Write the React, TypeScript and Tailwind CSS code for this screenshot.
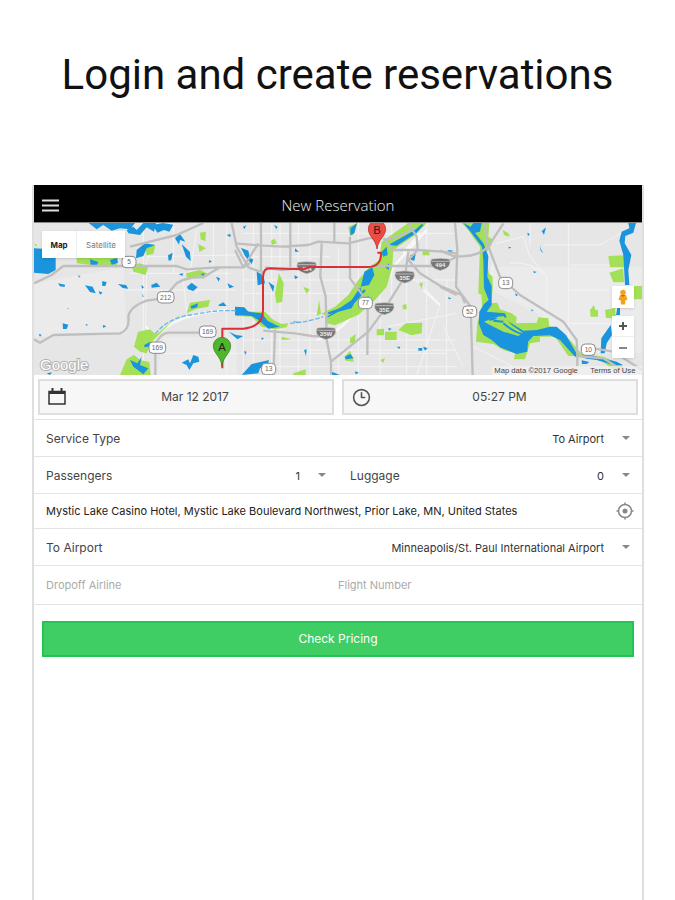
import { Clock3 } from "lucide-react";
import type { ReactNode } from "react";

const WATER = "#1a94dc";
const PARK = "#a3e055";
const ROAD = "#bfbfbf";

function Shield({ x, y, label }: { x: number; y: number; label: string }) {
  const w = label.length > 2 ? 50 : 42;
  return (
    <g>
      <rect x={x - w / 2} y={y - 17} width={w} height={34} rx={12} fill="#fff" stroke="#8a8a8a" strokeWidth={3} />
      <text x={x} y={y + 7} textAnchor="middle" fontSize={20} fill="#666">{label}</text>
    </g>
  );
}

function Interstate({ x, y, label }: { x: number; y: number; label: string }) {
  return (
    <g transform={`translate(${x} ${y})`}>
      <path d="M-27-15Q0-20 27-15Q38 10 0 20Q-38 10-27-15Z" fill="#777" stroke="#ddd" strokeWidth={2} />
      <path d="M-26-8H26" stroke="#ddd" strokeWidth={2} />
      <text y={10} textAnchor="middle" fontSize={18} fontWeight="bold" fill="#eee">{label}</text>
    </g>
  );
}

function Pin({ x, y, label, fill, edge }: { x: number; y: number; label: string; fill: string; edge: string }) {
  return (
    <g transform={`translate(${x} ${y})`}>
      <path d="M0 0C-4-30-26-38-26-60A26 26 0 0 1 26-60C26-38 4-30 0 0Z" fill={fill} stroke={edge} strokeWidth={2} />
      <text y={-46} textAnchor="middle" fontSize={34} fill="#222">{label}</text>
    </g>
  );
}

function RouteMap() {
  return (
    <svg viewBox="12 129 1824 456" preserveAspectRatio="xMidYMid slice" className="block h-full w-full font-['Liberation_Sans',sans-serif]" role="img" aria-label="Route map">
      <rect x="12" y="129" width="1824" height="456" fill="#e6e6e6" />
      <path d="M12 310L280 262L290 460L12 470ZM400 470H620V585H380ZM1380 260H1836V520H1640L1520 400L1380 330Z" fill="#ebebeb" />
      {/* minor streets */}
      <g stroke="#f4f4f4" strokeWidth={3} fill="none">
        <path d="M340 129V585M375 200L350 240L347 440L376 470M430 129V280M460 300L470 400M500 150L480 280L500 340M550 129V260M590 129V585M640 200V585M670 129V585M725 129V560M750 129V585M805 129V585M840 129V585M925 200V585M985 129V585M1050 129V585M1085 129V350M1130 200V585M1190 129V585M1250 300V585" />
        <path d="M290 330H620M350 230L620 225M300 280H600M400 520H1250M640 160H1280M640 230H900M640 300H1050M640 340H1000M700 400H900M640 480H1280M740 510H1280M660 560H1280M1110 300H1280M1070 440L1280 400" />
        <path d="M1615 129V500M1400 190L1480 170L1500 230L1550 290V400M1540 195H1710L1790 150M1620 255H1780M1620 330H1740M1620 430H1750M1440 250Q1500 240 1550 290M1330 500L1450 560M1230 375L1160 585M1230 375L1180 320L1140 290M1240 440L1300 560M1390 230L1380 400M1500 129V200" />
      </g>
      <path d="M376 470C410 435 460 400 590 390M347 440L376 470L350 500M860 480Q940 450 970 400Q1050 360 1090 260L1190 150M1120 220L1170 160M1230 375L1180 330" stroke="#f8f8f8" strokeWidth={7} fill="none" />

      {/* parks */}
      <g fill={PARK}>
        <path d="M140 232H265L260 262L190 256L140 250ZM305 256L330 250L355 260L347 285L310 275ZM345 200L376 196L370 222L350 226ZM510 158L528 155L526 184L512 178ZM505 192L528 205L508 216ZM468 280L510 270L540 284L520 292H470ZM480 368L540 360L535 380L500 386L470 400ZM324 455L360 448L378 464L440 412L455 404L430 420L365 486L350 520L330 515L312 500ZM270 585L290 538L312 524L330 540L358 546L362 585ZM12 192H20V200Z" />
        <path transform="translate(615 0)" d="M340 140L368 129L355 165L345 168ZM108 182L118 176L126 190L110 194ZM124 370L120 340L132 280L146 310L142 365ZM30 222L44 230L42 240ZM205 320L224 328L215 342ZM55 395L90 395L115 420L140 432L160 430L155 442L120 448L80 440L50 410L0 408V390ZM245 408L252 360L258 400L275 408V430L300 436L370 404L420 360L455 320L472 262L475 210L540 165L575 129H520L440 185L432 240L400 265L370 300L340 345L300 380ZM345 475L362 462L360 490H345ZM425 448L447 446V466H425ZM450 455H485V480H450ZM490 450L512 430L562 428L560 460L530 466ZM552 310L564 308L560 326ZM502 376L514 372L515 388H504ZM563 212H583V226H563ZM328 530L345 512L357 545L332 542ZM175 580L212 568V585H175ZM435 540L450 535L445 548ZM140 470L170 478L140 480Z" />
        <path transform="translate(1230 0)" d="M65 129H148L145 170L160 180L148 208L138 215L146 280L158 290V330L152 370L172 368L180 388L215 400L230 412L228 430L290 428L295 412L325 415L328 440L350 442L390 480L430 528H385L345 470H300V485L270 490L255 538H222L225 520L190 510L160 492L108 485L112 430L126 380L124 345L115 340L120 200L105 180L85 150ZM188 150L205 160L210 170L192 165ZM505 228L552 226V262H510ZM508 278L550 265L552 307H520ZM580 318H606V358H580ZM495 390L525 384L528 415L498 414ZM450 390L462 376L466 390H474V410H452ZM430 522L490 530L540 552L560 570L520 568L480 540Z" />
      </g>

      {/* lakes and rivers */}
      <g fill={WATER}>
        <path d="M12 205L64 208L77 230V270L55 282L12 278ZM176 129H315L300 148L270 145L245 152L220 135L200 148ZM290 150L310 140L320 150L340 129H378L372 155L350 142L330 165L295 160ZM368 135L398 129L430 134L418 155L402 150L382 158ZM320 210L345 190L376 195L350 205L340 228L318 235ZM435 175L450 162L466 185L450 180L447 194ZM455 192L480 216L482 244L468 230ZM414 226L428 218L424 240L416 242ZM180 238L205 246L200 256L182 254ZM240 240L260 234L264 248L245 255ZM165 316L188 320L197 340L180 336ZM216 304L230 306L226 318H217ZM264 312L288 315L295 326L278 324ZM84 310L105 314L104 321L90 319ZM364 315L380 308L391 320L365 323ZM471 320L485 308L503 322L490 333L474 328ZM558 290L570 295L566 305ZM592 310L612 320L598 325ZM206 333L218 338L210 344ZM145 284L152 292H146ZM98 430L115 434L110 447H99ZM218 435L229 438L220 444ZM26 462L35 464L30 470ZM166 432L174 434L170 438ZM334 314L342 322L336 326ZM337 340L341 350L338 351ZM482 378L504 370L502 382L484 386ZM565 375L580 367L590 378H567ZM446 282L460 280L457 288ZM512 282L524 280L520 288ZM538 240L546 245L536 248ZM590 165L602 162L601 172ZM342 496L360 485L356 500L344 502ZM300 540L322 550L335 530L330 555L355 565L340 583L310 560ZM455 548L475 538L480 550L490 525L505 530L508 545L490 550L478 570L470 555ZM597 455L618 465L640 468L622 478ZM50 580L66 577L60 585ZM112 384L118 387H113ZM615 380L635 395L622 408Z" />
        <path transform="translate(615 0)" d="M18 203L40 212L45 235L55 238L50 252L30 228ZM346 145L366 129L358 160L346 165ZM24 140L34 136L28 148ZM117 135L128 140L124 148ZM65 275L85 285L90 310L68 316ZM100 305L118 318L114 336ZM0 380L28 382L40 395L80 400L100 425L135 440L100 446L70 420L50 408L0 405ZM178 286L190 292L180 298ZM180 205L192 215H180ZM276 410L350 360L378 318L388 275L412 262L418 285L402 315L375 320L382 340L365 355L350 385L310 395L280 412ZM440 215L455 200L458 225L444 230ZM462 250L450 262L462 270ZM460 195L540 150L560 132L566 135L545 158L485 197ZM526 225L542 222L538 242L528 240ZM330 530L346 522L356 535L332 538ZM20 585L50 552L102 540L98 555L75 565L70 580ZM207 510L215 508L213 528ZM28 512L35 516L30 525ZM390 358L400 348L410 365ZM550 504H562V512H550ZM564 500L578 504L570 512ZM290 575L315 585H290ZM485 500L496 500L493 507ZM460 444L470 446L462 452ZM360 574L372 578L362 583ZM80 472L87 476L80 480ZM172 424L200 426L190 430Z" />
        <path transform="translate(1230 0)" d="M70 129L92 140L100 129H125L120 155L105 158L130 190L145 228L142 290L155 318V375L140 395L195 400L200 412L190 415L250 452L290 450L330 440H350L378 465L415 530H405L360 480L330 466L280 468L264 485L262 515L230 522L180 502L155 480L130 465L116 430L118 395L132 372L146 360L132 325L130 240L126 200L95 160ZM565 129H588L580 158L556 168L554 190L574 225L565 270L568 315H555L550 225L538 182L545 155L568 145ZM532 384H540V405H528ZM512 435L516 465L500 490L494 520H482L484 475ZM415 528L450 525L530 545L550 556L520 555L470 540L440 536ZM425 541L448 546L440 552H426ZM305 154L318 142L312 164ZM262 158L270 162L264 168ZM300 196L304 210L310 220L302 212ZM205 200L214 202L207 206ZM22 210L40 212L30 218ZM25 350L34 356L26 358ZM225 340L234 345L228 349ZM274 388L281 391L275 394ZM280 273L290 276L282 280Z" />
      </g>
      <path transform="translate(1230 0)" d="M132 425L165 412L190 408L215 435L248 458L235 468L190 455L150 435Z" fill={PARK} />
      <path transform="translate(1230 0)" d="M160 422L190 425M148 420L170 414M190 430Q220 455 245 462" stroke={WATER} strokeWidth={6} fill="none" />
      <path d="M376 462C400 430 440 410 480 405S540 390 620 392M780 430Q840 425 880 410" stroke="#68b7e6" strokeWidth={4} fill="none" strokeDasharray="14 5" />
      <path d="M895 400L960 378L1005 330M625 385L690 415L730 435" stroke={WATER} strokeWidth={7} fill="none" />

      {/* highways */}
      <g stroke={ROAD} strokeWidth={7} fill="none" strokeLinejoin="round">
        <path d="M12 310L65 285L100 258H440L470 268L560 262H640L660 250M12 478L30 488L70 465L270 460Q300 450 295 410Q300 380 350 362L400 355L440 310Q470 290 520 292L570 262M376 585V495Q390 460 415 458H520M300 200L440 165L520 129M605 129L620 200L655 262L690 275" />
        <path transform="translate(615 0)" d="M0 190L70 196L140 200L220 195L250 185L340 190L400 175L440 172M78 129V270L85 290M166 129V262M298 129V185M0 210L25 262L70 190M345 170V295L375 335L390 355M260 190L256 290L272 350L275 480L288 545V585M288 545L400 455L440 400L510 290L520 215M398 380L397 525M120 450L115 585M90 262L140 270L220 262M410 258H610L665 230M445 175L475 210H550L620 215L665 220M520 129L545 170L548 210L520 240L555 280L620 320L680 345L690 370M85 452L180 460L230 468L275 470M445 180Q500 170 540 145" />
        <path transform="translate(1230 0)" d="M45 129L52 210L48 320L70 350L92 380L98 585M0 212L40 228Q110 235 145 200L190 130M135 129L140 185Q160 240 180 290L240 345L370 425L410 480L412 528L490 535L570 585M460 505L520 515L606 570M412 510V560M0 320L50 345" />
      </g>

      <Shield x={297} y={246} label="5" />
      <Shield x={407} y={352} label="212" />
      <Shield x={382} y={503} label="169" />
      <Shield x={533} y={455} label="169" />
      <Shield x={716} y={567} label="13" />
      <Shield x={1006} y={369} label="77" />
      <Shield x={1319} y={395} label="52" />
      <Shield x={1427} y={309} label="13" />
      <Shield x={1675} y={509} label="10" />
      <Interstate x={830} y={262} label="494" />
      <Interstate x={888} y={459} label="35W" />
      <Interstate x={1124} y={290} label="35E" />
      <Interstate x={1063} y={385} label="35E" />
      <Interstate x={1231} y={252} label="494" />

      <path d="M577 565V446H640Q700 440 699 390V290Q700 265 720 265L820 268L840 261H1010Q1055 262 1053 218H1042" fill="none" stroke="#d92f36" strokeWidth={6} strokeLinejoin="round" />
      <Pin x={576} y={558} label="A" fill="#4fb52b" edge="#2c7d16" />
      <Pin x={1041} y={207} label="B" fill="#ee4b43" edge="#a52620" />

      <text x={30} y={571} fontSize={45} fill="#fff" stroke="#b0b0b0" strokeWidth={6} paintOrder="stroke">Google</text>
      <rect x={1385} y={558} width={451} height={27} fill="#f2f2f2" opacity={0.75} />
      <text x={1393} y={580} fontSize={23} fill="#444">Map data ©2017 Google</text>
      <text x={1681} y={580} fontSize={23} fill="#444">Terms of Use</text>
    </svg>
  );
}

function Caret() {
  return <span aria-hidden="true" className="pointer-events-none absolute top-1/2 right-3 -mt-0.5 border-x-4 border-t-4 border-x-transparent border-t-[#888]" />;
}

function SelectRow({ id, label, options }: { id: string; label: string; options: string[] }) {
  return (
    <div className="relative flex h-9 min-w-0 flex-1 items-center">
      <label htmlFor={id} className="shrink-0 pt-0.5 pl-3 text-xs text-[#444]">{label}</label>
      <select id={id} className="h-full min-w-0 flex-1 appearance-none bg-transparent pt-0.5 pr-[38px] text-[11px] text-[#333] outline-none [text-align-last:right]">
        {options.map((o) => <option key={o}>{o}</option>)}
      </select>
      <Caret />
    </div>
  );
}

function PickerButton({ icon, children }: { icon: ReactNode; children: ReactNode }) {
  return (
    <button type="button" className="flex h-9 flex-1 items-center border-2 border-[#dedede] bg-[#f7f7f7] px-2 text-xs text-[#444]">
      {icon}
      <span className="flex-1">{children}</span>
    </button>
  );
}

export default function App() {
  return (
    <main className="flex min-h-screen flex-col bg-white font-[Inter,'Liberation_Sans',sans-serif]">
      <h1 className="pt-12 text-center font-[Roboto,sans-serif] text-[42px] leading-[54px] text-[#111]">Login and create reservations</h1>
      <section className="mt-[83px] mr-[31px] ml-8 flex flex-1 flex-col border-x-2 border-[#dfdfdf]">
        <header className="relative flex h-[38px] items-center justify-center border-b border-[#888] bg-black">
          <button type="button" aria-label="Open menu" className="absolute top-[14px] left-2">
            <svg width="17" height="13" viewBox="0 0 17 13" stroke="#ddd" strokeWidth="2"><path d="M0 1.500H17M0 6.500H17M0 11.500H17" /></svg>
          </button>
          <h2 className="pt-1 font-['Open_Sans','Noto_Sans',sans-serif] text-[15px] font-light text-[#eee]">New Reservation</h2>
        </header>

        <div className="relative aspect-[4/1] w-full overflow-hidden">
          <RouteMap />
          <div className="absolute top-2 left-2 flex h-[27px] bg-white text-[8px] shadow-sm">
            <button type="button" className="w-[35px] border-r border-[#eee] font-bold text-[#222]">Map</button>
            <button type="button" className="w-[48px] text-[#777]">Satellite</button>
          </div>
          <div className="absolute right-2 bottom-[17px] flex w-[22px] flex-col gap-2">
            <button type="button" aria-label="Street view" className="flex h-[22px] items-center justify-center bg-white shadow-sm">
              <svg width="12" height="16" viewBox="0 0 12 16" fill="#f5a21b">
                <circle cx="6" cy="3.5" r="2.8" />
                <path d="M3 6H9L10.500 11H8.500L8 15.500H4L3.500 11H1.500Z" />
                <path d="M4 6L6 8L8 6Z" fill="#b86b10" />
              </svg>
            </button>
            <div className="flex flex-col bg-white shadow-sm">
              <button type="button" aria-label="Zoom in" className="flex h-[21px] items-center justify-center border-b border-[#eee]">
                <svg width="8" height="8" viewBox="0 0 8 8" stroke="#555" strokeWidth="2"><path d="M0 4H8M4 0V8" /></svg>
              </button>
              <button type="button" aria-label="Zoom out" className="flex h-[21px] items-center justify-center">
                <svg width="8" height="8" viewBox="0 0 8 8" stroke="#888" strokeWidth="2"><path d="M0 4H8" /></svg>
              </button>
            </div>
          </div>
        </div>

        <form onSubmit={(e) => e.preventDefault()}>
          <div className="flex gap-2 px-1 py-1">
            <PickerButton icon={
              <svg width="18" height="18" viewBox="0 0 18 18" fill="none" stroke="#333" strokeWidth="1.500">
                <path d="M1 3.500H17V16H1Z" />
                <path d="M1 4.500H17" strokeWidth="3" />
                <path d="M4.500 0V4M13.500 0V4" strokeWidth="2" />
              </svg>
            }>Mar 12 2017</PickerButton>
            <PickerButton icon={<Clock3 size={19} strokeWidth={2} color="#555" />}>05:27 PM</PickerButton>
          </div>
          <div className="divide-y divide-[#e4e4e4] border-y border-[#e4e4e4]">
            <div className="flex">
              <SelectRow id="service" label="Service Type" options={["To Airport", "From Airport"]} />
            </div>
            <div className="flex">
              <SelectRow id="passengers" label="Passengers" options={["1", "2", "3", "4"]} />
              <SelectRow id="luggage" label="Luggage" options={["0", "1", "2", "3"]} />
            </div>
            <div className="flex h-[35px] items-center pr-2 pl-3">
              <input aria-label="Pickup address" className="min-w-0 flex-1 text-[11px] text-[#222] outline-none" defaultValue="Mystic Lake Casino Hotel, Mystic Lake Boulevard Northwest, Prior Lake, MN, United States" />
              <button type="button" aria-label="Use current location">
                <svg width="18" height="18" viewBox="0 0 18 18" fill="none" stroke="#888" strokeWidth="1.500">
                  <circle cx="9" cy="9" r="6.500" />
                  <circle cx="9" cy="9" r="2.500" fill="#888" stroke="none" />
                  <path d="M9 0.500V3M9 15V17.500M0.500 9H3M15 9H17.500" />
                </svg>
              </button>
            </div>
            <div className="flex">
              <SelectRow id="airport" label="To Airport" options={["Minneapolis/St. Paul International Airport"]} />
            </div>
            <div className="flex h-[38px] px-3">
              <input aria-label="Dropoff airline" placeholder="Dropoff Airline" className="min-w-0 flex-1 text-[11px] outline-none placeholder:text-[#aaa]" />
              <input aria-label="Flight number" placeholder="Flight Number" className="min-w-0 flex-1 text-[11px] outline-none placeholder:text-[#aaa]" />
            </div>
          </div>
          <div className="px-2 py-4">
            <button type="submit" className="h-9 w-full border-2 border-[#20c552] bg-[#3fce64] text-xs text-white">Check Pricing</button>
          </div>
        </form>
      </section>
    </main>
  );
}
